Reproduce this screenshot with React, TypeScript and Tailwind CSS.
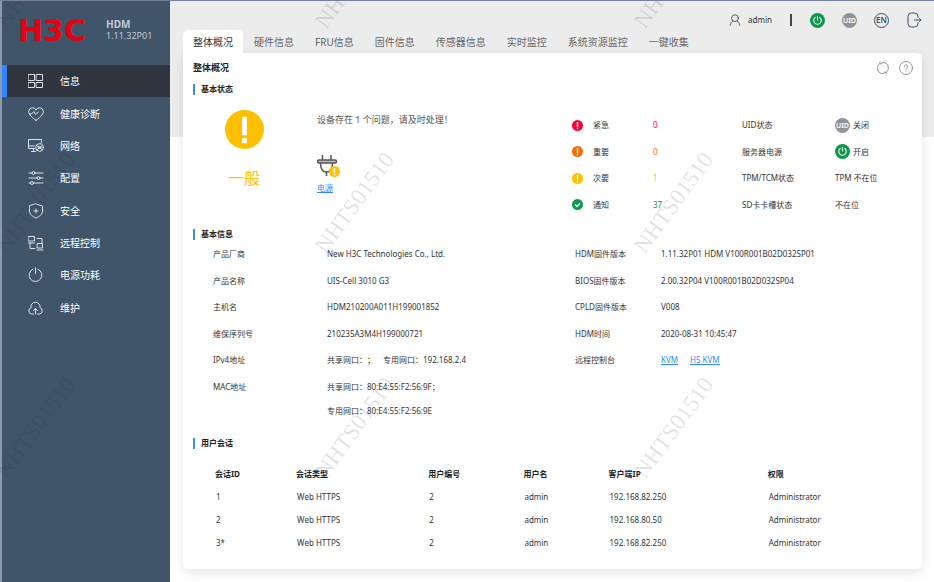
import type { ReactNode } from "react";
import clsx from "clsx";

const Glyph = ({ children, className }: { children: ReactNode; className?: string }) => (
  <svg
    viewBox="0 0 16 16"
    fill="none"
    stroke="currentColor"
    strokeLinecap="round"
    strokeLinejoin="round"
    className={clsx("shrink-0", className)}
    aria-hidden="true"
  >
    {children}
  </svg>
);

const navItems = [
  {
    label: "信息",
    icon: <path d="M.5 1.500h6v6h-6zM8.500 1.500h6v6h-6zM.5 9.500h6v5h-6zM8.500 9.500h6v5h-6z" />,
  },
  {
    label: "健康诊断",
    icon: (
      <>
        <path d="M8 14.300C4.600 11.800.7 9 .7 5.400a3.800 3.800 0 0 1 7.300-1.300 3.800 3.800 0 0 1 7.300 1.300c0 3.600-3.900 6.400-7.300 8.900z" />
        <path d="M1.500 8h2l2.500-2.500 1.500 3 3-2.500" />
      </>
    ),
  },
  {
    label: "网络",
    icon: (
      <>
        <path d="M7 10.500H.5v-9h13v3.500M.5 8h6M3.500 13.500h4M5.500 10.500v3" />
        <circle cx="11.500" cy="9.500" r="3.800" />
        <circle cx="11.500" cy="9.500" r="1.300" />
        <path d="M8.500 7.500l6 4.500M14.500 7.500l-6 4.500" />
      </>
    ),
  },
  {
    label: "配置",
    icon: (
      <>
        <path d="M1 3h3M7 3h8M1 8h8M12 8h3M1 13h1.500M5.500 13H15" />
        <circle cx="5.500" cy="3" r="1.500" />
        <circle cx="10.500" cy="8" r="1.500" />
        <circle cx="4" cy="13" r="1.500" />
      </>
    ),
  },
  {
    label: "安全",
    icon: <path d="M8 1l6.500 2v5c0 3.500-3 5.500-6.500 7-3.500-1.500-6.500-3.500-6.500-7V3zM8 6v4M6 8h4" />,
  },
  {
    label: "远程控制",
    icon: (
      <path d="M.5 1.500h6v4.500h-6zM.5 8h6M9 3.500h5v4M9.500 8.500h5V13h-5zM9 15h6M2 8v5.500h5" />
    ),
  },
  {
    label: "电源功耗",
    icon: <path d="M7.500 1v5.500M5 2.200a6.400 6.400 0 1 0 5 0" />,
  },
  {
    label: "维护",
    icon: (
      <path d="M5.500 14H3.500a3.200 3.200 0 0 1-.5-6.200 4.600 4.600 0 1 1 9 0 3.200 3.200 0 0 1-.5 6.200h-2M7.500 14V8.500M5.500 10.500l2-2 2 2" />
    ),
  },
];

const tabs = [
  "整体概况",
  "硬件信息",
  "FRU信息",
  "固件信息",
  "传感器信息",
  "实时监控",
  "系统资源监控",
  "一键收集",
];

const events = [
  { label: "紧急", count: 0, color: "text-[#ff0036]", ok: false },
  { label: "重要", count: 0, color: "text-[#ff6a00]", ok: false },
  { label: "次要", count: 1, color: "text-[#ffc000]", ok: false },
  { label: "通知", count: 37, color: "text-[#0a9a48]", ok: true },
];

const deviceInfo = [
  ["产品厂商", "New H3C Technologies Co., Ltd."],
  ["产品名称", "UIS-Cell 3010 G3"],
  ["主机名", "HDM210200A011H199001852"],
  ["维保序列号", "210235A3M4H199000721"],
  ["IPv4地址", "共享网口：；\u3000专用网口：192.168.2.4"],
  ["MAC地址", "共享网口：80:E4:55:F2:56:9F；"],
];

const firmwareInfo = [
  ["HDM固件版本", "1.11.32P01 HDM V100R001B02D032SP01"],
  ["BIOS固件版本", "2.00.32P04 V100R001B02D032SP04"],
  ["CPLD固件版本", "V008"],
  ["HDM时间", "2020-08-31 10:45:47"],
];

const sessionColumns = [
  { title: "会话ID", width: "w-[81px]" },
  { title: "会话类型", width: "w-[132px]" },
  { title: "用户编号", width: "w-[95px]" },
  { title: "用户名", width: "w-[85px]" },
  { title: "客户端IP", width: "w-[159px]" },
  { title: "权限", width: "w-[130px]" },
];

const sessions = [
  ["1", "Web HTTPS", "2", "admin", "192.168.82.250", "Administrator"],
  ["2", "Web HTTPS", "2", "admin", "192.168.80.50", "Administrator"],
  ["3*", "Web HTTPS", "2", "admin", "192.168.82.250", "Administrator"],
];

const AlertIcon = ({ className }: { className?: string }) => (
  <svg viewBox="0 0 40 40" className={clsx("shrink-0", className)} aria-hidden="true">
    <circle cx="20" cy="20" r="20" fill="currentColor" />
    <path d="M17.500 7h5v19h-5zM17.500 29h5v5h-5z" fill="#fff" />
  </svg>
);

const CheckIcon = ({ className }: { className?: string }) => (
  <svg viewBox="0 0 40 40" className={clsx("shrink-0", className)} aria-hidden="true">
    <circle cx="20" cy="20" r="20" fill="currentColor" />
    <path d="M11 20l7 7 12-12" fill="none" stroke="#fff" strokeWidth="5" />
  </svg>
);

const PowerBadge = () => (
  <svg viewBox="0 0 16 16" className="size-[15px] shrink-0" aria-hidden="true">
    <circle cx="8" cy="8" r="8" fill="#0a9a48" />
    <path
      d="M8 3.500v4M5.600 4.800a4 4 0 1 0 4.800 0"
      fill="none"
      stroke="#fff"
      strokeWidth="1.100"
      strokeLinecap="round"
    />
  </svg>
);

const UidBadge = () => (
  <span className="flex size-[15px] shrink-0 items-center justify-center rounded-full bg-[#92929a] text-[7px] leading-none font-semibold text-white">
    UID
  </span>
);

const SectionTitle = ({ children, className }: { children: ReactNode; className?: string }) => (
  <h2 className={clsx("ml-[10px] flex h-3 items-center gap-[6px] text-[8px] font-bold text-[#222]", className)}>
    <span className="h-[11px] w-[2px] bg-[#3b8cff]" />
    {children}
  </h2>
);

const Sidebar = () => (
  <aside className="w-[170px] shrink-0 border-l-2 border-[#8f9bab] bg-[#41556a] text-white">
    <div className="flex h-16 items-start pt-4 pl-4">
      <span className="font-['DejaVu_Sans',sans-serif] text-[30px] leading-7 font-bold text-[#e60012]">
        H3C
      </span>
      <div className="ml-auto w-[64px] pt-[2px] text-[9px] leading-[11px] text-[#c3cad2]">
        <strong className="block text-[10px]">HDM</strong>
        1.11.32P01
      </div>
    </div>
    <nav className="grid h-[259px] auto-rows-fr">
      {navItems.map((item, i) => (
        <a
          key={item.label}
          href="#"
          className={clsx(
            "flex items-center gap-4 text-[10px]",
            i === 0 ? "border-l-[5px] border-[#2f88ff] bg-[#30353f] pl-[21px]" : "pl-[26px]"
          )}
        >
          <Glyph className="size-4 text-[#dde2e8]">{item.icon}</Glyph>
          {item.label}
        </a>
      ))}
    </nav>
  </aside>
);

const TopBar = () => (
  <header className="flex h-[29px] items-center justify-end gap-[17px] pt-[9px] pr-3 text-[#3f4f66]">
    <div className="flex items-center gap-[7px] text-[8px] text-[#333]">
      <Glyph className="size-3">
        <circle cx="8" cy="5.500" r="4.500" />
        <path d="M1.500 15c.3-2.500 1.700-4.500 3.700-5.500M14.500 15c-.3-2.500-1.700-4.500-3.700-5.500" />
      </Glyph>
      admin
    </div>
    <span className="mx-px h-3 w-[2px] bg-[#444]" />
    <button aria-label="电源">
      <PowerBadge />
    </button>
    <button aria-label="UID">
      <UidBadge />
    </button>
    <button className="flex size-[15px] items-center justify-center rounded-full border border-[#3f4f66] text-[8px] leading-none font-semibold">
      EN
    </button>
    <button aria-label="退出">
      <Glyph className="size-4">
        <path d="M12 5.500V4.500A3.500 3.500 0 0 0 8.500 1H5.500A3.500 3.500 0 0 0 2 4.500v7A3.500 3.500 0 0 0 5.500 15h3a3.500 3.500 0 0 0 3.500-3.500v-1M8.500 8H15M13.500 6.500L15 8l-1.500 1.500" />
      </Glyph>
    </button>
  </header>
);

const HealthStatus = () => (
  <div className="mt-[15px] grid grid-cols-[122fr_267fr_170fr_180fr]">
    <div className="flex flex-col items-center text-[#ffc000]">
      <AlertIcon className="size-[39px]" />
      <p className="mt-[19px] text-[16px] leading-5">一般</p>
    </div>
    <div className="pl-[12px]">
      <p className="text-[9px] leading-5 text-[#555]">设备存在 1 个问题，请及时处理！</p>
      <div className="relative mt-6 w-6">
        <svg viewBox="0 0 24 24" className="size-6" fill="none" stroke="#555" strokeWidth="1.500" aria-hidden="true">
          <path d="M5.500 1v5M14 1v5M9.500 18v4" />
          <path d="M2 6h16a1 1 0 0 1 0 3H2a1 1 0 0 1 0-3z" fill="#bbb" />
          <path d="M3.500 9c0 6 2 9 6 9s6-3 6-9" />
        </svg>
        <AlertIcon className="absolute right-[1px] bottom-[1px] size-[11px] text-[#ffc000]" />
      </div>
      <a href="#" className="mt-1 block w-fit text-[8px] leading-3 text-[#2f88ff] underline">
        电源
      </a>
    </div>
    <ul className="mt-[2px] grid h-[106px] grid-rows-4">
      {events.map((event) => (
        <li key={event.label} className="flex items-center">
          {event.ok ? (
            <CheckIcon className={clsx("size-[11px]", event.color)} />
          ) : (
            <AlertIcon className={clsx("size-[11px]", event.color)} />
          )}
          <span className="ml-[10px] w-[60px]">{event.label}</span>
          <span className={event.color}>{event.count}</span>
        </li>
      ))}
    </ul>
    <dl className="mt-[2px] grid h-[106px] grid-cols-[93px_1fr] grid-rows-4 items-center">
      <dt>UID状态</dt>
      <dd className="flex items-center gap-[3px]">
        <UidBadge />
        关闭
      </dd>
      <dt>服务器电源</dt>
      <dd className="flex items-center gap-[3px]">
        <PowerBadge />
        开启
      </dd>
      <dt>TPM/TCM状态</dt>
      <dd>TPM 不在位</dd>
      <dt>SD卡卡槽状态</dt>
      <dd>不在位</dd>
    </dl>
  </div>
);

const BasicInfo = () => (
  <div className="mt-px grid grid-cols-[362fr_347fr] pl-[30px]">
    <div>
      <dl className="grid h-[159px] grid-cols-[114px_1fr] grid-rows-6 items-center">
        {deviceInfo.map(([label, value]) => (
          <div key={label} className="contents">
            <dt>{label}</dt>
            <dd>{value}</dd>
          </div>
        ))}
      </dl>
      <p className="pl-[114px] leading-[22px]">专用网口：80:E4:55:F2:56:9E</p>
    </div>
    <dl className="grid h-[159px] grid-cols-[86px_1fr] grid-rows-6 items-center">
      {firmwareInfo.map(([label, value]) => (
        <div key={label} className="contents">
          <dt>{label}</dt>
          <dd>{value}</dd>
        </div>
      ))}
      <dt>远程控制台</dt>
      <dd className="flex gap-3 text-[#2f88ff] underline">
        <a href="#">KVM</a>
        <a href="#">H5 KVM</a>
      </dd>
    </dl>
  </div>
);

const SessionTable = () => (
  <div className="mt-[13px] pr-6 pl-8">
    <table className="w-full table-fixed text-left">
      <thead>
        <tr className="h-[23px] text-[#222]">
          {sessionColumns.map((col) => (
            <th key={col.title} className={clsx("font-bold", col.width)}>
              {col.title}
            </th>
          ))}
        </tr>
      </thead>
      <tbody>
        {sessions.map((row) => (
          <tr key={row[0]} className="h-[23px]">
            {row.map((cell, i) => (
              <td key={i} className="pl-px">
                {cell}
              </td>
            ))}
          </tr>
        ))}
      </tbody>
    </table>
  </div>
);

// Repeated diagonal account mark laid over the whole console
const Watermark = () => (
  <div className="pointer-events-none absolute inset-0 overflow-hidden" aria-hidden="true">
    <div className="-mt-[136px] -ml-[124px] grid auto-rows-[225px] grid-cols-[319px_319px_319px]">
      {Array.from({ length: 9 }, (_, i) => (
        <div key={i} className="flex items-center justify-center">
          <span className="-rotate-[54deg] font-['Liberation_Serif',serif] text-[23px] leading-6 text-[#1b2640]/15">
            NHTS01510
          </span>
        </div>
      ))}
    </div>
  </div>
);

export default function App() {
  return (
    <div
      lang="zh-CN"
      className="relative flex min-h-screen border-t border-[#76829a] bg-white font-['Noto_Sans','Noto_Sans_CJK_SC',sans-serif] text-[8px] leading-3 text-[#333] [text-spacing-trim:space-all]"
    >
      <Sidebar />
      <div className="min-w-0 flex-1 bg-[linear-gradient(#ececec_136px,#fff_136px)]">
        <TopBar />
        <main className="pr-3 pb-3 pl-[13px]">
          <div role="tablist" className="flex h-[23px] gap-px">
            {tabs.map((tab, i) => (
              <button
                key={tab}
                role="tab"
                aria-selected={i === 0}
                className={clsx(
                  "px-[10px] text-[10px] whitespace-nowrap",
                  i === 0 ? "rounded-t-[5px] bg-white text-[#333]" : "text-[#666]"
                )}
              >
                {tab}
              </button>
            ))}
          </div>
          <section className="rounded-[5px] rounded-tl-none bg-white pb-[15px] shadow-[0_4px_12px_rgba(0,0,0,0.1)]">
            <div className="flex h-[30px] items-center pr-[9px] pl-[10px]">
              <h1 className="text-[9px] font-bold text-[#222]">整体概况</h1>
              <div className="ml-auto flex gap-[9px] text-[#888]">
                <button aria-label="刷新">
                  <Glyph className="size-[14px]">
                    <path d="M2 10.500A6.300 6.300 0 0 1 4.500 2.800M4.500 1v2.200h2.200M7 1.700A6.300 6.300 0 0 1 14 6M14 6a6.300 6.300 0 0 1-2.500 7.200M11.500 15v-2.200H9.300M9 14.300a6.300 6.300 0 0 1-7-3.800" />
                  </Glyph>
                </button>
                <button aria-label="帮助">
                  <Glyph className="size-[14px]">
                    <circle cx="8" cy="8" r="7.400" />
                    <path d="M6 6.500a2 2 0 1 1 2.800 1.800c-.6.300-.8.700-.8 1.200M8 11.500v.2" />
                  </Glyph>
                </button>
              </div>
            </div>
            <SectionTitle>基本状态</SectionTitle>
            <HealthStatus />
            <SectionTitle className="mt-[10px]">基本信息</SectionTitle>
            <BasicInfo />
            <SectionTitle className="mt-[15px]">用户会话</SectionTitle>
            <SessionTable />
          </section>
        </main>
      </div>
      <Watermark />
    </div>
  );
}
